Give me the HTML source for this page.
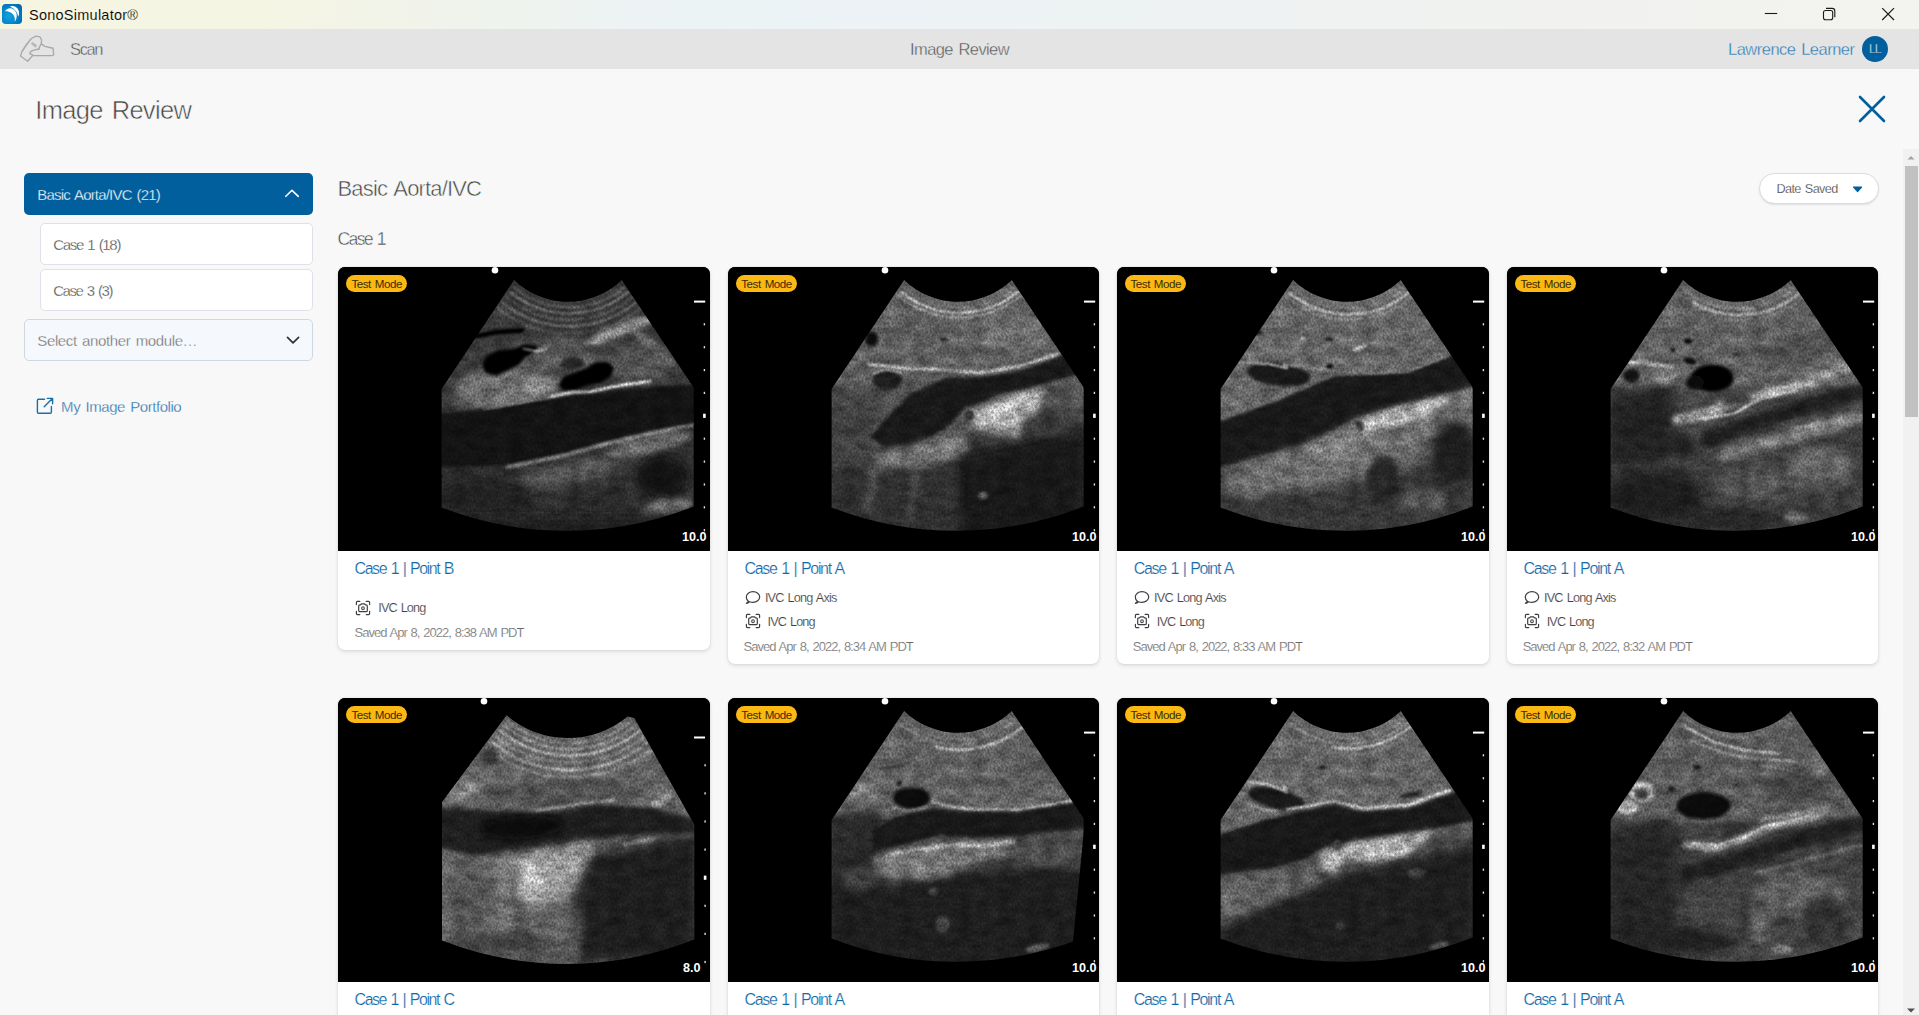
<!DOCTYPE html>
<html lang="en"><head><meta charset="utf-8"><title>SonoSimulator</title>
<style>
html,body{margin:0;padding:0;}
body{width:1919px;height:1015px;overflow:hidden;background:#f8f8f8;font-family:"Liberation Sans",sans-serif;position:relative;}
.t{position:absolute;white-space:nowrap;display:block;margin:0;padding:0;font-weight:400;text-decoration:none;}
.abs{position:absolute;}
#titlebar{left:0;top:0;width:1919px;height:29px;background:linear-gradient(90deg,#f6f5e2 0%,#f5f5e4 14%,#f0f3ec 24%,#edf3f4 33%,#ecf3f6 41%,#eef2f3 60%,#f1f2f0 80%,#f3f3ef 100%);}
#nav{left:0;top:29px;width:1919px;height:40px;background:#e4e4e4;}
.card{position:absolute;width:371.6px;background:#fff;border-radius:7px;box-shadow:0 2px 4px rgba(0,0,0,.10),0 0 2px rgba(0,0,0,.13);overflow:hidden;}
.us{position:absolute;left:0;top:0;width:372px;height:284px;background:#000;display:block;}
.badge{position:absolute;left:8px;top:8px;width:61px;height:17px;border-radius:9px;background:#fdb913;}
.sb{position:absolute;border-radius:5px;box-sizing:border-box;}
</style></head><body>

<svg width="0" height="0" style="position:absolute"><defs>
<clipPath id="sec10"><path d="M176.1,12.9 A77,77 0 0 0 283.7,12.9 L355.7,120.5 L355.7,239.5 A345,345 0 0 1 103.6,240.5 L103.6,122 Z"/></clipPath>
<clipPath id="sec8"><path d="M168.6,17.2 A94,94 0 0 0 289.7,18.6 L296.3,20.1 L356.3,126.5 L356.3,241.5 A345,345 0 0 1 104,242.5 L104,104 Z"/></clipPath>
<filter id="b3" filterUnits="userSpaceOnUse" x="0" y="0" width="1320" height="1015"><feGaussianBlur stdDeviation="3"/></filter>
<filter id="b4" filterUnits="userSpaceOnUse" x="0" y="0" width="1320" height="1015"><feGaussianBlur stdDeviation="4"/></filter>
<filter id="b5" filterUnits="userSpaceOnUse" x="0" y="0" width="1320" height="1015"><feGaussianBlur stdDeviation="5"/></filter>
<filter id="b6" filterUnits="userSpaceOnUse" x="0" y="0" width="1320" height="1015"><feGaussianBlur stdDeviation="6"/></filter>
<filter id="b8" filterUnits="userSpaceOnUse" x="0" y="0" width="1320" height="1015"><feGaussianBlur stdDeviation="8"/></filter>
<filter id="b10" filterUnits="userSpaceOnUse" x="0" y="0" width="1320" height="1015"><feGaussianBlur stdDeviation="10"/></filter>
<filter id="b14" filterUnits="userSpaceOnUse" x="0" y="0" width="1320" height="1015"><feGaussianBlur stdDeviation="14"/></filter>
<filter id="b12" filterUnits="userSpaceOnUse" x="0" y="0" width="1320" height="1015"><feGaussianBlur stdDeviation="12"/></filter>
<filter id="b16" filterUnits="userSpaceOnUse" x="0" y="0" width="1320" height="1015"><feGaussianBlur stdDeviation="16"/></filter>
<filter id="b18" filterUnits="userSpaceOnUse" x="0" y="0" width="1320" height="1015"><feGaussianBlur stdDeviation="18"/></filter>
<filter id="b20" filterUnits="userSpaceOnUse" x="0" y="0" width="1320" height="1015"><feGaussianBlur stdDeviation="20"/></filter>
<filter id="b30" filterUnits="userSpaceOnUse" x="0" y="0" width="1320" height="1015"><feGaussianBlur stdDeviation="30"/></filter>
<filter id="sp" filterUnits="userSpaceOnUse" x="0" y="0" width="372" height="283" color-interpolation-filters="sRGB">
 <feTurbulence type="fractalNoise" baseFrequency="0.5 0.36" numOctaves="2" seed="7" result="n"/>
 <feColorMatrix in="n" type="matrix" values="1 0 0 0 0  1 0 0 0 0  1 0 0 0 0  0 0 0 0 1" result="g"/>
 <feComposite in="SourceGraphic" in2="g" operator="arithmetic" k1="0.84" k2="0.58" k3="0" k4="0" result="s1"/>
 <feTurbulence type="fractalNoise" baseFrequency="0.07 0.10" numOctaves="2" seed="11" result="n2"/>
 <feColorMatrix in="n2" type="matrix" values="1 0 0 0 0  1 0 0 0 0  1 0 0 0 0  0 0 0 0 1" result="g2"/>
 <feComposite in="s1" in2="g2" operator="arithmetic" k1="0.66" k2="0.56" k3="0" k4="0"/>
</filter>
</defs></svg>
<header>
<div id="titlebar" class="abs"></div>
<div id="nav" class="abs"></div>
<span class="t" style="left:29.00px;top:7.73px;font-size:14.5px;line-height:14.5px;letter-spacing:0.247px;word-spacing:0.00px;color:#000;-webkit-text-stroke:0.12px #f6f5e3;">SonoSimulator®</span>
<span class="t" style="left:70.00px;top:40.83px;font-size:16.5px;line-height:16.5px;letter-spacing:-1.370px;word-spacing:0.00px;color:#555;-webkit-text-stroke:0.35px #e4e4e4;">Scan</span>
<span class="t" style="left:910.00px;top:40.83px;font-size:16.5px;line-height:16.5px;letter-spacing:-0.599px;word-spacing:1.65px;color:#545454;-webkit-text-stroke:0.35px #e4e4e4;">Image Review</span>
<span class="t" style="left:1728.00px;top:41.03px;font-size:16.5px;line-height:16.5px;letter-spacing:-0.510px;word-spacing:1.65px;color:#2d7cb6;-webkit-text-stroke:0.3px #e4e4e4;">Lawrence Learner</span>
<div class="abs" style="left:1862px;top:36px;width:26px;height:26px;border-radius:13px;background:#025f9e;"></div>
<span class="t" style="left:1869.00px;top:43.30px;font-size:12.4px;line-height:12.4px;letter-spacing:-1.193px;word-spacing:0.00px;color:#e3eef7;-webkit-text-stroke:0.3px #025f9e;">LL</span>
</header>
<h1 class="t" style="left:35.30px;top:97.51px;font-size:25.5px;line-height:25.5px;letter-spacing:-0.692px;word-spacing:2.55px;color:#444;-webkit-text-stroke:0.55px #f8f8f8;">Image Review</h1>
<aside>
<div class="sb" style="left:24px;top:173px;width:289px;height:42px;background:#025f9e;"></div>
<span class="t" style="left:37.30px;top:186.80px;font-size:15px;line-height:15px;letter-spacing:-0.810px;word-spacing:1.50px;color:#fff;-webkit-text-stroke:0.3px #025f9e;">Basic Aorta/IVC (21)</span>
<div class="sb" style="left:40px;top:223px;width:273px;height:42px;background:#fff;border:1px solid #dde2e8;"></div>
<span class="t" style="left:53.20px;top:237.40px;font-size:15px;line-height:15px;letter-spacing:-1.317px;word-spacing:1.50px;color:#444;-webkit-text-stroke:0.3px #fff;">Case 1 (18)</span>
<div class="sb" style="left:40px;top:269px;width:273px;height:42px;background:#fff;border:1px solid #dde2e8;"></div>
<span class="t" style="left:53.20px;top:283.40px;font-size:15px;line-height:15px;letter-spacing:-1.414px;word-spacing:1.50px;color:#444;-webkit-text-stroke:0.3px #fff;">Case 3 (3)</span>
<div class="sb" style="left:24px;top:319px;width:289px;height:42px;background:#f5f9fd;border:1px solid #cfd7e0;"></div>
<span class="t" style="left:37.30px;top:333.30px;font-size:15px;line-height:15px;letter-spacing:-0.371px;word-spacing:1.50px;color:#6a6a6a;-webkit-text-stroke:0.3px #f5f9fd;">Select another module…</span>
<span class="t" style="left:61.10px;top:399.20px;font-size:15px;line-height:15px;letter-spacing:-0.438px;word-spacing:1.50px;color:#1a6aaa;-webkit-text-stroke:0.3px #f8f8f8;">My Image Portfolio</span>
</aside>
<main>
<h2 class="t" style="left:337.50px;top:177.78px;font-size:22px;line-height:22px;letter-spacing:-0.840px;word-spacing:2.20px;color:#444;-webkit-text-stroke:0.5px #f8f8f8;">Basic Aorta/IVC</h2>
<h3 class="t" style="left:337.60px;top:230.82px;font-size:17.7px;line-height:17.7px;letter-spacing:-1.770px;word-spacing:1.77px;color:#444;-webkit-text-stroke:0.42px #f8f8f8;">Case 1</h3>
<div class="abs" style="left:1759px;top:173px;width:119.5px;height:31px;border-radius:15.5px;background:#fff;border:1px solid #d8dde4;box-sizing:border-box;box-shadow:0 1px 2px rgba(0,0,0,.10);"></div>
<span class="t" style="left:1776.50px;top:182.75px;font-size:12.7px;line-height:12.7px;letter-spacing:-0.648px;word-spacing:1.27px;color:#333;-webkit-text-stroke:0.25px #fff;">Date Saved</span>
<div class="abs" style="left:1903px;top:149px;width:16px;height:866px;background:#f1f1f1;"></div>
<div class="abs" style="left:1905px;top:166px;width:13px;height:251px;background:#c1c1c1;"></div>
<svg class="abs" style="left:2px;top:4px" width="20" height="20" viewBox="0 0 20 20"><defs><radialGradient id="ai" cx="0.35" cy="0.6" r="0.75"><stop offset="0" stop-color="#12a3de"/><stop offset="0.6" stop-color="#0483c9"/><stop offset="1" stop-color="#0466ab"/></radialGradient></defs><rect width="20" height="20" rx="3.8" fill="url(#ai)"/><path d="M3.0,7.2 C5.2,3.9 8.8,3.3 11.6,5.4 C15.2,8.1 15.9,13.0 12.8,17.8 C13.4,13.6 11.8,10.6 9.2,8.8 C7.4,7.5 5.2,7.0 3.0,7.2 Z" fill="#fff"/><path d="M8.0,2.4 C11.8,1.3 15.2,3.0 16.6,6.4 C17.4,8.4 17.2,10.6 16.2,12.6 C15.6,8.4 13.0,4.8 8.0,2.4 Z" fill="#fff"/></svg>
<svg class="abs" style="left:0;top:29px" width="70" height="40" viewBox="0 29 70 40" fill="none" stroke="#a9a9a9" stroke-width="1.35" stroke-linejoin="round" stroke-linecap="round"><path d="M20.48,56.00 L27.72,61.24 L32.97,55.17 L29.79,53.66 L30.34,51.86 L32.41,50.69 L38.62,48.83 L41.24,43.45 L41.66,40.00 L39.86,36.83 L36.00,36.14 L31.38,38.48 L26.55,44.48 L22.21,50.90 Z"/><path d="M41.52,44.14 L44.83,46.34 L53.10,48.28 L53.66,54.62 L52.55,55.59 L32.97,55.59"/><path d="M22.76,51.03 L27.24,44.14 L28.97,42.07" stroke-width="1"/><path d="M30.76,43.59 L32.83,42.07 L37.24,45.38 L35.31,47.72 Z" fill="#b8b8b8" stroke="none"/><path d="M37.79,49.79 L39.66,49.10" stroke-width="1"/></svg>
<svg class="abs" style="left:1750px;top:0" width="169" height="29" viewBox="1750 0 169 29" fill="none" stroke="#1a1a1a" stroke-width="1.1"><path d="M1764.8,13.5 H1777.2"/><rect x="1823.5" y="10.5" width="9.2" height="9.2" rx="2"/><path d="M1826,8.4 H1832.2 a2.6,2.6 0 0 1 2.6,2.6 V17.2"/><path d="M1882.2,8.2 L1894,20 M1894,8.2 L1882.2,20" stroke-width="1.2"/></svg>
<svg class="abs" style="left:1850px;top:88px" width="44" height="44" viewBox="1850 88 44 44" fill="none" stroke="#025f9e" stroke-width="2.6" stroke-linecap="round"><path d="M1860,97 L1884,121 M1884,97 L1860,121"/></svg>
<svg class="abs" style="left:280px;top:185px" width="24" height="16" viewBox="280 185 24 16" fill="none" stroke="#fff" stroke-width="1.6" stroke-linecap="round" stroke-linejoin="round"><path d="M285.8,196.3 L292,190.3 L298.3,196.3"/></svg>
<svg class="abs" style="left:280px;top:332px" width="24" height="16" viewBox="280 332 24 16" fill="none" stroke="#333" stroke-width="1.7" stroke-linecap="round" stroke-linejoin="round"><path d="M287.5,337.3 L293,342.8 L298.6,337.3"/></svg>
<svg class="abs" style="left:34px;top:395px" width="22" height="22" viewBox="34 395 22 22" fill="none" stroke="#1a6eab" stroke-width="1.4" stroke-linecap="round" stroke-linejoin="round"><path d="M44.5,399.3 H38.6 a1.2,1.2 0 0 0 -1.2,1.2 V412 a1.2,1.2 0 0 0 1.2,1.2 H50.2 a1.2,1.2 0 0 0 1.2,-1.2 V406.5"/><path d="M47.3,398.4 H52.6 V403.7 M52.4,398.6 L44.2,406.8"/></svg>
<svg class="abs" style="left:1850px;top:183px" width="16" height="12" viewBox="1850 183 16 12"><path d="M1853.6,187.0 H1861.6 L1857.6,191.6 Z" fill="#025f9e" stroke="#025f9e" stroke-width="1.2" stroke-linejoin="round"/></svg>
<svg class="abs" style="left:1903px;top:150px" width="16" height="16" viewBox="0 0 16 16"><path d="M4.4,9.6 L8,6 L11.6,9.6 Z" fill="#a3a3a3"/></svg>
<svg class="abs" style="left:1903px;top:999px" width="16" height="16" viewBox="0 0 16 16"><path d="M4,9.6 L8,13.6 L12,9.6 Z" fill="#505050"/></svg>
<div class="card" style="left:338px;top:267px;width:372px;height:383px;">
<svg class="us" viewBox="0 0 372 284" width="372" height="284"><rect width="372" height="284" fill="#000"/><g clip-path="url(#sec10)"><g filter="url(#sp)"><rect width="372" height="283" fill="#3c3c3c"/><g transform="translate(-8,-7) scale(0.29542)"><polygon points="378,60 1232,60 1232,330 378,330" fill="#3e3e3e"/><path d="M622,92 A292,292 0 0 0 998,92" fill="none" stroke="#777" stroke-width="6" filter="url(#b3)"/><path d="M609,107 A312,312 0 0 0 1011,107" fill="none" stroke="#9a9a9a" stroke-width="6" filter="url(#b3)"/><path d="M595,124 A334,334 0 0 0 1025,124" fill="none" stroke="#6a6a6a" stroke-width="6" filter="url(#b3)"/><path d="M581,141 A356,356 0 0 0 1039,141" fill="none" stroke="#888" stroke-width="6" filter="url(#b3)"/><path d="M566,159 A380,380 0 0 0 1054,159" fill="none" stroke="#606060" stroke-width="8" filter="url(#b3)"/><ellipse cx="985" cy="236" rx="140" ry="20" fill="#9a9a9a" transform="rotate(-22 985 236)" filter="url(#b8)"/><ellipse cx="1100" cy="300" rx="90" ry="20" fill="#7a7a7a" transform="rotate(40 1100 300)" filter="url(#b8)"/><ellipse cx="600" cy="440" rx="180" ry="80" fill="#7c7c7c" filter="url(#b20)"/><ellipse cx="760" cy="330" rx="160" ry="60" fill="#646464" filter="url(#b20)"/><ellipse cx="1040" cy="350" rx="130" ry="70" fill="#5c5c5c" filter="url(#b20)"/><polyline points="495,258 560,245 650,238" fill="none" stroke="#050505" stroke-width="16" stroke-linecap="round" stroke-linejoin="round" filter="url(#b4)"/><polygon points="515,355 530,325 570,305 620,300 660,285 705,290 692,312 660,330 640,355 600,375 560,392 525,382" fill="#050505" filter="url(#b5)"/><polyline points="655,300 700,310 730,300" fill="none" stroke="#d8d8d8" stroke-width="5" stroke-linecap="round" stroke-linejoin="round" filter="url(#b3)"/><polygon points="775,425 790,395 830,380 870,365 900,345 940,345 962,365 950,395 920,415 870,425 830,440 790,442" fill="#050505" filter="url(#b5)"/><ellipse cx="700" cy="420" rx="60" ry="30" fill="#9a9a9a" filter="url(#b10)"/><ellipse cx="820" cy="350" rx="40" ry="22" fill="#2a2a2a" filter="url(#b6)"/><polygon points="370,520 560,500 740,468 900,448 1100,428 1240,420 1240,560 1100,580 960,612 800,655 600,697 370,706" fill="#141414" filter="url(#b5)"/><polyline points="745,462 820,448 880,446 960,428 1085,410" fill="none" stroke="#ffffff" stroke-width="9" stroke-linecap="round" stroke-linejoin="round" filter="url(#b3)"/><polyline points="520,505 740,466" fill="none" stroke="#8a8a8a" stroke-width="6" stroke-linecap="round" stroke-linejoin="round" filter="url(#b4)"/><polygon points="370,710 600,700 800,660 960,616 1240,560 1240,950 370,950" fill="#363636" filter="url(#b8)"/><polyline points="600,702 800,660 960,616 1100,584 1232,558" fill="none" stroke="#a8a8a8" stroke-width="10" stroke-linecap="round" stroke-linejoin="round" filter="url(#b5)"/><ellipse cx="1080" cy="625" rx="150" ry="28" fill="#808080" transform="rotate(-14 1080 625)" filter="url(#b10)"/><ellipse cx="800" cy="725" rx="200" ry="36" fill="#606060" transform="rotate(-12 800 725)" filter="url(#b14)"/><ellipse cx="1125" cy="735" rx="85" ry="75" fill="#121212" filter="url(#b14)"/><ellipse cx="1140" cy="835" rx="90" ry="24" fill="#787878" transform="rotate(-8 1140 835)" filter="url(#b10)"/><ellipse cx="520" cy="800" rx="180" ry="70" fill="#262626" filter="url(#b20)"/><ellipse cx="900" cy="830" rx="120" ry="50" fill="#2e2e2e" filter="url(#b20)"/><polygon points="370,870 1240,870 1240,950 370,950" fill="#222" filter="url(#b14)"/></g></g></g><circle cx="157" cy="3.3" r="3.3" fill="#fff"/><rect x="356" y="33.6" width="11.2" height="2" fill="#fff"/><rect x="365.7" y="56.2" width="1.4" height="2.2" fill="#ddd"/><rect x="365.7" y="79.1" width="1.4" height="2.2" fill="#ddd"/><rect x="365.7" y="102.0" width="1.4" height="2.2" fill="#ddd"/><rect x="365.7" y="124.8" width="1.4" height="2.2" fill="#ddd"/><rect x="365.1" y="146.7" width="2.6" height="4.2" fill="#fff"/><rect x="365.7" y="170.6" width="1.4" height="2.2" fill="#ddd"/><rect x="365.7" y="193.5" width="1.4" height="2.2" fill="#ddd"/><rect x="365.7" y="216.4" width="1.4" height="2.2" fill="#ddd"/><rect x="365.7" y="239.2" width="1.4" height="2.2" fill="#ddd"/><rect x="365.7" y="262.1" width="1.4" height="2.2" fill="#ddd"/><text x="368.5" y="274.3" text-anchor="end" font-family="Liberation Sans,sans-serif" font-weight="700" font-size="12.6" fill="#fff">10.0</text></svg>
<div class="badge"></div>
<span class="t" style="left:13.40px;top:11.28px;font-size:11.6px;line-height:11.6px;letter-spacing:-0.459px;word-spacing:1.16px;color:#3a2c00;">Test Mode</span>
<h4 class="t" style="left:16.60px;top:293.66px;font-size:16px;line-height:16px;letter-spacing:-1.462px;word-spacing:1.60px;color:#1068a8;-webkit-text-stroke:0.22px #fff;">Case 1 | Point B</h4>
<svg class="abs" style="left:15.5px;top:331.5px" width="18" height="18" viewBox="-9 -9 18 18" fill="none" stroke="#3c3f44" stroke-width="1.2" stroke-linejoin="round" stroke-linecap="round"><path d="M-6.6,-3.4 V-5.6 a1,1 0 0 1 1,-1 H-3.2 M3.2,-6.6 H5.6 a1,1 0 0 1 1,1 V-3.4 M6.6,3.4 V5.6 a1,1 0 0 1 -1,1 H3.2 M-3.2,6.6 H-5.6 a1,1 0 0 1 -1,-1 V3.4"/><path d="M-2.4,-3.2 L-1.6,-4.1 H1.6 L2.4,-3.2 H3 a1.3,1.3 0 0 1 1.3,1.3 V2.4 a1.3,1.3 0 0 1 -1.3,1.3 H-3 a1.3,1.3 0 0 1 -1.3,-1.3 V-1.9 a1.3,1.3 0 0 1 1.3,-1.3 Z"/><ellipse cx="0" cy="0.2" rx="1.3" ry="1.5" stroke-width="1.1"/></svg>
<span class="t" style="left:40.30px;top:335.35px;font-size:12.7px;line-height:12.7px;letter-spacing:-0.889px;word-spacing:1.27px;color:#404040;-webkit-text-stroke:0.15px #fff;">IVC Long</span>
<span class="t" style="left:16.60px;top:359.30px;font-size:13px;line-height:13px;letter-spacing:-1.017px;word-spacing:1.30px;color:#6a6a6a;-webkit-text-stroke:0.2px #fff;">Saved Apr 8, 2022, 8:38 AM PDT</span>
</div>
<div class="card" style="left:727.9px;top:267px;width:371px;height:397px;">
<svg class="us" viewBox="0 0 372 284" width="372" height="284"><rect width="372" height="284" fill="#000"/><g clip-path="url(#sec10)"><g filter="url(#sp)"><rect width="372" height="283" fill="#585858"/><g transform="translate(-7.7,-7) scale(0.29542)"><polygon points="370,60 1240,60 1240,420 370,420" fill="#6a6a6a" filter="url(#b10)"/><path d="M621,93 A294,294 0 0 0 999,93" fill="none" stroke="#8a8a8a" stroke-width="6" filter="url(#b3)"/><path d="M610,106 A311,311 0 0 0 1010,106" fill="none" stroke="#f4f4f4" stroke-width="7" filter="url(#b3)"/><path d="M600,118 A327,327 0 0 0 1020,118" fill="none" stroke="#c0c0c0" stroke-width="6" filter="url(#b3)"/><ellipse cx="1000" cy="250" rx="160" ry="60" fill="#7a7a7a" filter="url(#b20)"/><ellipse cx="512" cy="268" rx="22" ry="26" fill="#080808" filter="url(#b5)"/><ellipse cx="757" cy="268" rx="13" ry="6" fill="#222" filter="url(#b3)"/><polygon points="370,430 520,640 800,610 1240,470 1240,950 370,950" fill="#3a3a3a" filter="url(#b14)"/><polygon points="370,430 520,470 520,640 470,850 370,850" fill="#484848" filter="url(#b14)"/><polyline points="500,352 620,366 760,372 870,382 1010,360 1145,318" fill="none" stroke="#d4d4d4" stroke-width="9" stroke-linecap="round" stroke-linejoin="round" filter="url(#b4)"/><polygon points="1160,322 1010,376 880,396 770,396 640,455 545,555 508,600 560,638 660,626 760,572 830,502 960,452 1100,420 1240,380" fill="#1c1c1c" filter="url(#b5)"/><ellipse cx="565" cy="406" rx="50" ry="32" fill="#202020" filter="url(#b5)"/><polyline points="515,385 560,370 610,380" fill="none" stroke="#bbb" stroke-width="5" stroke-linecap="round" stroke-linejoin="round" filter="url(#b3)"/><polygon points="1100,425 1240,385 1240,560 1080,520" fill="#5a5a5a" filter="url(#b10)"/><polygon points="835,520 950,468 1100,436 1070,520 1000,605 900,585 850,565" fill="#b8b8b8" filter="url(#b12)"/><ellipse cx="975" cy="500" rx="90" ry="26" fill="#e0e0e0" transform="rotate(-22 975 500)" filter="url(#b10)"/><ellipse cx="842" cy="525" rx="17" ry="19" fill="#3a3a3a" filter="url(#b4)"/><polygon points="515,655 800,590 840,640 700,705 520,730" fill="#7e7e7e" filter="url(#b12)"/><ellipse cx="780" cy="640" rx="60" ry="36" fill="#909090" filter="url(#b12)"/><polygon points="800,660 1240,570 1240,950 800,950" fill="#1a1a1a" filter="url(#b20)"/><ellipse cx="1120" cy="560" rx="100" ry="40" fill="#3c3c3c" filter="url(#b14)"/><ellipse cx="890" cy="798" rx="16" ry="12" fill="#6a6a6a" filter="url(#b5)"/><polygon points="370,700 800,720 800,950 370,950" fill="#343434" filter="url(#b20)"/><polyline points="520,700 500,840" fill="none" stroke="#585858" stroke-width="30" stroke-linecap="round" stroke-linejoin="round" filter="url(#b10)"/><polyline points="660,720 640,860" fill="none" stroke="#505050" stroke-width="30" stroke-linecap="round" stroke-linejoin="round" filter="url(#b10)"/></g></g></g><circle cx="157" cy="3.3" r="3.3" fill="#fff"/><rect x="356" y="33.6" width="11.2" height="2" fill="#fff"/><rect x="365.7" y="56.2" width="1.4" height="2.2" fill="#ddd"/><rect x="365.7" y="79.1" width="1.4" height="2.2" fill="#ddd"/><rect x="365.7" y="102.0" width="1.4" height="2.2" fill="#ddd"/><rect x="365.7" y="124.8" width="1.4" height="2.2" fill="#ddd"/><rect x="365.1" y="146.7" width="2.6" height="4.2" fill="#fff"/><rect x="365.7" y="170.6" width="1.4" height="2.2" fill="#ddd"/><rect x="365.7" y="193.5" width="1.4" height="2.2" fill="#ddd"/><rect x="365.7" y="216.4" width="1.4" height="2.2" fill="#ddd"/><rect x="365.7" y="239.2" width="1.4" height="2.2" fill="#ddd"/><rect x="365.7" y="262.1" width="1.4" height="2.2" fill="#ddd"/><text x="368.5" y="274.3" text-anchor="end" font-family="Liberation Sans,sans-serif" font-weight="700" font-size="12.6" fill="#fff">10.0</text></svg>
<div class="badge"></div>
<span class="t" style="left:13.40px;top:11.28px;font-size:11.6px;line-height:11.6px;letter-spacing:-0.459px;word-spacing:1.16px;color:#3a2c00;">Test Mode</span>
<h4 class="t" style="left:16.60px;top:293.66px;font-size:16px;line-height:16px;letter-spacing:-1.336px;word-spacing:1.60px;color:#1068a8;-webkit-text-stroke:0.22px #fff;">Case 1 | Point A</h4>
<svg class="abs" style="left:16.3px;top:322.0px" width="18" height="16" viewBox="-9 -8 18 16" fill="none" stroke="#3c3f44" stroke-width="1.2" stroke-linejoin="round" stroke-linecap="round"><path d="M-4.6,4.2 C-6,3.2 -6.7,1.7 -6.7,0 C-6.7,-2.9 -3.7,-5.3 0,-5.3 C3.7,-5.3 6.7,-2.9 6.7,0 C6.7,2.9 3.7,5.3 0,5.3 C-1.2,5.3 -2.4,5.1 -3.4,4.7 C-4.4,5.6 -5.5,6.2 -6.6,6.3 C-5.8,5.6 -5.0,4.9 -4.6,4.2 Z"/></svg>
<svg class="abs" style="left:16.2px;top:345.2px" width="18" height="18" viewBox="-9 -9 18 18" fill="none" stroke="#3c3f44" stroke-width="1.2" stroke-linejoin="round" stroke-linecap="round"><path d="M-6.6,-3.4 V-5.6 a1,1 0 0 1 1,-1 H-3.2 M3.2,-6.6 H5.6 a1,1 0 0 1 1,1 V-3.4 M6.6,3.4 V5.6 a1,1 0 0 1 -1,1 H3.2 M-3.2,6.6 H-5.6 a1,1 0 0 1 -1,-1 V3.4"/><path d="M-2.4,-3.2 L-1.6,-4.1 H1.6 L2.4,-3.2 H3 a1.3,1.3 0 0 1 1.3,1.3 V2.4 a1.3,1.3 0 0 1 -1.3,1.3 H-3 a1.3,1.3 0 0 1 -1.3,-1.3 V-1.9 a1.3,1.3 0 0 1 1.3,-1.3 Z"/><ellipse cx="0" cy="0.2" rx="1.3" ry="1.5" stroke-width="1.1"/></svg>
<span class="t" style="left:37.00px;top:324.55px;font-size:12.7px;line-height:12.7px;letter-spacing:-0.818px;word-spacing:1.27px;color:#404040;-webkit-text-stroke:0.15px #fff;">IVC Long Axis</span>
<span class="t" style="left:39.70px;top:348.50px;font-size:12.7px;line-height:12.7px;letter-spacing:-0.889px;word-spacing:1.27px;color:#404040;-webkit-text-stroke:0.15px #fff;">IVC Long</span>
<span class="t" style="left:15.70px;top:372.80px;font-size:13px;line-height:13px;letter-spacing:-1.004px;word-spacing:1.30px;color:#6a6a6a;-webkit-text-stroke:0.2px #fff;">Saved Apr 8, 2022, 8:34 AM PDT</span>
</div>
<div class="card" style="left:1117.1px;top:267px;width:372px;height:397px;">
<svg class="us" viewBox="0 0 372 284" width="372" height="284"><rect width="372" height="284" fill="#000"/><g clip-path="url(#sec10)"><g filter="url(#sp)"><rect width="372" height="283" fill="#585858"/><g transform="translate(-7.3,-7) scale(0.29542)"><polygon points="370,60 1240,60 1240,560 370,560" fill="#727272" filter="url(#b10)"/><path d="M620,95 A296,296 0 0 0 1000,95" fill="none" stroke="#909090" stroke-width="6" filter="url(#b3)"/><path d="M607,110 A316,316 0 0 0 1013,110" fill="none" stroke="#f0f0f0" stroke-width="7" filter="url(#b3)"/><path d="M596,123 A333,333 0 0 0 1024,123" fill="none" stroke="#a8a8a8" stroke-width="5" filter="url(#b3)"/><ellipse cx="655" cy="268" rx="8" ry="5" fill="#eee" filter="url(#b3)"/><ellipse cx="845" cy="298" rx="28" ry="7" fill="#ddd" transform="rotate(-20 845 298)" filter="url(#b3)"/><ellipse cx="742" cy="268" rx="16" ry="6" fill="#1a1a1a" filter="url(#b3)"/><ellipse cx="745" cy="360" rx="11" ry="9" fill="#111" filter="url(#b3)"/><ellipse cx="505" cy="245" rx="12" ry="8" fill="#222" filter="url(#b3)"/><ellipse cx="572" cy="388" rx="108" ry="38" fill="#1c1c1c" transform="rotate(6 572 388)" filter="url(#b5)"/><polyline points="470,347 540,352 600,366 590,350" fill="none" stroke="#e8e8e8" stroke-width="6" stroke-linecap="round" stroke-linejoin="round" filter="url(#b3)"/><polyline points="600,355 720,372 830,380" fill="none" stroke="#a8a8a8" stroke-width="6" stroke-linecap="round" stroke-linejoin="round" filter="url(#b4)"/><polygon points="365,548 560,480 700,420 770,390 900,386 1010,380 1150,326 1240,296 1240,428 1100,465 960,500 830,540 700,610 560,650 420,690 365,704" fill="#1d1d1d" filter="url(#b5)"/><polyline points="770,388 900,383 1010,377 1150,323" fill="none" stroke="#909090" stroke-width="5" stroke-linecap="round" stroke-linejoin="round" filter="url(#b4)"/><polygon points="420,700 560,655 700,615 830,545 960,505 1100,470 1240,432 1240,580 1080,610 1000,700 700,770 560,800 420,760" fill="#7a7a7a" filter="url(#b14)"/><polygon points="830,548 960,506 1100,470 1160,455 1100,520 960,560 860,600" fill="#cccccc" filter="url(#b10)"/><ellipse cx="760" cy="640" rx="80" ry="44" fill="#949494" filter="url(#b14)"/><ellipse cx="845" cy="562" rx="13" ry="20" fill="#444" transform="rotate(-20 845 562)" filter="url(#b4)"/><polygon points="365,720 480,780 700,790 1000,720 1240,600 1240,950 365,950" fill="#3c3c3c" filter="url(#b16)"/><ellipse cx="925" cy="745" rx="55" ry="85" fill="#2a2a2a" filter="url(#b12)"/><ellipse cx="1165" cy="650" rx="70" ry="110" fill="#242424" filter="url(#b14)"/><ellipse cx="470" cy="760" rx="80" ry="50" fill="#7a7a7a" filter="url(#b14)"/><ellipse cx="700" cy="850" rx="200" ry="50" fill="#3c3c3c" filter="url(#b16)"/><ellipse cx="1060" cy="820" rx="80" ry="40" fill="#606060" filter="url(#b14)"/></g></g></g><circle cx="157" cy="3.3" r="3.3" fill="#fff"/><rect x="356" y="33.6" width="11.2" height="2" fill="#fff"/><rect x="365.7" y="56.2" width="1.4" height="2.2" fill="#ddd"/><rect x="365.7" y="79.1" width="1.4" height="2.2" fill="#ddd"/><rect x="365.7" y="102.0" width="1.4" height="2.2" fill="#ddd"/><rect x="365.7" y="124.8" width="1.4" height="2.2" fill="#ddd"/><rect x="365.1" y="146.7" width="2.6" height="4.2" fill="#fff"/><rect x="365.7" y="170.6" width="1.4" height="2.2" fill="#ddd"/><rect x="365.7" y="193.5" width="1.4" height="2.2" fill="#ddd"/><rect x="365.7" y="216.4" width="1.4" height="2.2" fill="#ddd"/><rect x="365.7" y="239.2" width="1.4" height="2.2" fill="#ddd"/><rect x="365.7" y="262.1" width="1.4" height="2.2" fill="#ddd"/><text x="368.5" y="274.3" text-anchor="end" font-family="Liberation Sans,sans-serif" font-weight="700" font-size="12.6" fill="#fff">10.0</text></svg>
<div class="badge"></div>
<span class="t" style="left:13.40px;top:11.28px;font-size:11.6px;line-height:11.6px;letter-spacing:-0.459px;word-spacing:1.16px;color:#3a2c00;">Test Mode</span>
<h4 class="t" style="left:16.60px;top:293.66px;font-size:16px;line-height:16px;letter-spacing:-1.336px;word-spacing:1.60px;color:#1068a8;-webkit-text-stroke:0.22px #fff;">Case 1 | Point A</h4>
<svg class="abs" style="left:16.3px;top:322.0px" width="18" height="16" viewBox="-9 -8 18 16" fill="none" stroke="#3c3f44" stroke-width="1.2" stroke-linejoin="round" stroke-linecap="round"><path d="M-4.6,4.2 C-6,3.2 -6.7,1.7 -6.7,0 C-6.7,-2.9 -3.7,-5.3 0,-5.3 C3.7,-5.3 6.7,-2.9 6.7,0 C6.7,2.9 3.7,5.3 0,5.3 C-1.2,5.3 -2.4,5.1 -3.4,4.7 C-4.4,5.6 -5.5,6.2 -6.6,6.3 C-5.8,5.6 -5.0,4.9 -4.6,4.2 Z"/></svg>
<svg class="abs" style="left:16.2px;top:345.2px" width="18" height="18" viewBox="-9 -9 18 18" fill="none" stroke="#3c3f44" stroke-width="1.2" stroke-linejoin="round" stroke-linecap="round"><path d="M-6.6,-3.4 V-5.6 a1,1 0 0 1 1,-1 H-3.2 M3.2,-6.6 H5.6 a1,1 0 0 1 1,1 V-3.4 M6.6,3.4 V5.6 a1,1 0 0 1 -1,1 H3.2 M-3.2,6.6 H-5.6 a1,1 0 0 1 -1,-1 V3.4"/><path d="M-2.4,-3.2 L-1.6,-4.1 H1.6 L2.4,-3.2 H3 a1.3,1.3 0 0 1 1.3,1.3 V2.4 a1.3,1.3 0 0 1 -1.3,1.3 H-3 a1.3,1.3 0 0 1 -1.3,-1.3 V-1.9 a1.3,1.3 0 0 1 1.3,-1.3 Z"/><ellipse cx="0" cy="0.2" rx="1.3" ry="1.5" stroke-width="1.1"/></svg>
<span class="t" style="left:37.00px;top:324.55px;font-size:12.7px;line-height:12.7px;letter-spacing:-0.818px;word-spacing:1.27px;color:#404040;-webkit-text-stroke:0.15px #fff;">IVC Long Axis</span>
<span class="t" style="left:39.70px;top:348.50px;font-size:12.7px;line-height:12.7px;letter-spacing:-0.889px;word-spacing:1.27px;color:#404040;-webkit-text-stroke:0.15px #fff;">IVC Long</span>
<span class="t" style="left:15.70px;top:372.80px;font-size:13px;line-height:13px;letter-spacing:-1.004px;word-spacing:1.30px;color:#6a6a6a;-webkit-text-stroke:0.2px #fff;">Saved Apr 8, 2022, 8:33 AM PDT</span>
</div>
<div class="card" style="left:1507px;top:267px;width:371.4px;height:397px;">
<svg class="us" viewBox="0 0 372 284" width="372" height="284"><rect width="372" height="284" fill="#000"/><g clip-path="url(#sec10)"><g filter="url(#sp)"><rect width="372" height="283" fill="#505050"/><g transform="translate(-6.8,-7) scale(0.29542)"><polygon points="370,60 1240,60 1240,430 370,430" fill="#6c6c6c" filter="url(#b10)"/><path d="M621,93 A294,294 0 0 0 999,93" fill="none" stroke="#8a8a8a" stroke-width="6" filter="url(#b3)"/><path d="M651,143 A318,318 0 0 0 1014,112" fill="none" stroke="#e0e0e0" stroke-width="7" filter="url(#b3)"/><path d="M617,98 A300,300 0 0 0 862,163" fill="none" stroke="#b0b0b0" stroke-width="5" filter="url(#b3)"/><path d="M752,199 A336,336 0 0 0 1026,125" fill="none" stroke="#8c8c8c" stroke-width="5" filter="url(#b3)"/><ellipse cx="1000" cy="300" rx="150" ry="50" fill="#5c5c5c" transform="rotate(-15 1000 300)" filter="url(#b16)"/><ellipse cx="636" cy="275" rx="14" ry="10" fill="#111" filter="url(#b3)"/><ellipse cx="584" cy="305" rx="9" ry="8" fill="#1a1a1a" filter="url(#b3)"/><ellipse cx="642" cy="342" rx="22" ry="12" fill="#111" transform="rotate(15 642 342)" filter="url(#b4)"/><ellipse cx="800" cy="320" rx="12" ry="5" fill="#333" filter="url(#b3)"/><ellipse cx="718" cy="400" rx="72" ry="46" fill="#060606" filter="url(#b6)"/><ellipse cx="660" cy="415" rx="30" ry="25" fill="#0c0c0c" filter="url(#b6)"/><polyline points="440,345 520,352 580,362" fill="none" stroke="#c4c4c4" stroke-width="14" stroke-linecap="round" stroke-linejoin="round" filter="url(#b6)"/><ellipse cx="445" cy="392" rx="28" ry="24" fill="#181818" filter="url(#b6)"/><ellipse cx="560" cy="400" rx="40" ry="22" fill="#999" filter="url(#b8)"/><polygon points="365,450 600,430 580,560 700,650 365,720" fill="#262626" filter="url(#b20)"/><polyline points="600,540 700,520 800,475 1000,430 1130,380 1240,330" fill="none" stroke="#a8a8a8" stroke-width="34" stroke-linecap="round" stroke-linejoin="round" filter="url(#b8)"/><polyline points="640,545 720,530 790,520 880,470 1000,440" fill="none" stroke="#d8d8d8" stroke-width="9" stroke-linecap="round" stroke-linejoin="round" filter="url(#b4)"/><polyline points="900,440 1060,420" fill="none" stroke="#d0d0d0" stroke-width="10" stroke-linecap="round" stroke-linejoin="round" filter="url(#b5)"/><ellipse cx="800" cy="470" rx="50" ry="22" fill="#444" filter="url(#b8)"/><polyline points="700,610 820,565 1000,505 1240,440" fill="none" stroke="#242424" stroke-width="56" stroke-linecap="round" stroke-linejoin="round" filter="url(#b10)"/><polyline points="760,665 1000,590 1240,525" fill="none" stroke="#8c8c8c" stroke-width="44" stroke-linecap="round" stroke-linejoin="round" filter="url(#b10)"/><polyline points="980,575 1150,540" fill="none" stroke="#bbb" stroke-width="8" stroke-linecap="round" stroke-linejoin="round" filter="url(#b5)"/><polygon points="365,700 760,690 1240,580 1240,950 365,950" fill="#424242" filter="url(#b16)"/><ellipse cx="1080" cy="700" rx="120" ry="70" fill="#707070" filter="url(#b16)"/><ellipse cx="870" cy="760" rx="150" ry="60" fill="#5c5c5c" filter="url(#b16)"/><ellipse cx="520" cy="800" rx="170" ry="90" fill="#242424" filter="url(#b20)"/><ellipse cx="1000" cy="870" rx="40" ry="16" fill="#888" filter="url(#b8)"/><ellipse cx="760" cy="880" rx="200" ry="40" fill="#2c2c2c" filter="url(#b16)"/></g></g></g><circle cx="157" cy="3.3" r="3.3" fill="#fff"/><rect x="356" y="33.6" width="11.2" height="2" fill="#fff"/><rect x="365.7" y="56.2" width="1.4" height="2.2" fill="#ddd"/><rect x="365.7" y="79.1" width="1.4" height="2.2" fill="#ddd"/><rect x="365.7" y="102.0" width="1.4" height="2.2" fill="#ddd"/><rect x="365.7" y="124.8" width="1.4" height="2.2" fill="#ddd"/><rect x="365.1" y="146.7" width="2.6" height="4.2" fill="#fff"/><rect x="365.7" y="170.6" width="1.4" height="2.2" fill="#ddd"/><rect x="365.7" y="193.5" width="1.4" height="2.2" fill="#ddd"/><rect x="365.7" y="216.4" width="1.4" height="2.2" fill="#ddd"/><rect x="365.7" y="239.2" width="1.4" height="2.2" fill="#ddd"/><rect x="365.7" y="262.1" width="1.4" height="2.2" fill="#ddd"/><text x="368.5" y="274.3" text-anchor="end" font-family="Liberation Sans,sans-serif" font-weight="700" font-size="12.6" fill="#fff">10.0</text></svg>
<div class="badge"></div>
<span class="t" style="left:13.40px;top:11.28px;font-size:11.6px;line-height:11.6px;letter-spacing:-0.459px;word-spacing:1.16px;color:#3a2c00;">Test Mode</span>
<h4 class="t" style="left:16.60px;top:293.66px;font-size:16px;line-height:16px;letter-spacing:-1.336px;word-spacing:1.60px;color:#1068a8;-webkit-text-stroke:0.22px #fff;">Case 1 | Point A</h4>
<svg class="abs" style="left:16.3px;top:322.0px" width="18" height="16" viewBox="-9 -8 18 16" fill="none" stroke="#3c3f44" stroke-width="1.2" stroke-linejoin="round" stroke-linecap="round"><path d="M-4.6,4.2 C-6,3.2 -6.7,1.7 -6.7,0 C-6.7,-2.9 -3.7,-5.3 0,-5.3 C3.7,-5.3 6.7,-2.9 6.7,0 C6.7,2.9 3.7,5.3 0,5.3 C-1.2,5.3 -2.4,5.1 -3.4,4.7 C-4.4,5.6 -5.5,6.2 -6.6,6.3 C-5.8,5.6 -5.0,4.9 -4.6,4.2 Z"/></svg>
<svg class="abs" style="left:16.2px;top:345.2px" width="18" height="18" viewBox="-9 -9 18 18" fill="none" stroke="#3c3f44" stroke-width="1.2" stroke-linejoin="round" stroke-linecap="round"><path d="M-6.6,-3.4 V-5.6 a1,1 0 0 1 1,-1 H-3.2 M3.2,-6.6 H5.6 a1,1 0 0 1 1,1 V-3.4 M6.6,3.4 V5.6 a1,1 0 0 1 -1,1 H3.2 M-3.2,6.6 H-5.6 a1,1 0 0 1 -1,-1 V3.4"/><path d="M-2.4,-3.2 L-1.6,-4.1 H1.6 L2.4,-3.2 H3 a1.3,1.3 0 0 1 1.3,1.3 V2.4 a1.3,1.3 0 0 1 -1.3,1.3 H-3 a1.3,1.3 0 0 1 -1.3,-1.3 V-1.9 a1.3,1.3 0 0 1 1.3,-1.3 Z"/><ellipse cx="0" cy="0.2" rx="1.3" ry="1.5" stroke-width="1.1"/></svg>
<span class="t" style="left:37.00px;top:324.55px;font-size:12.7px;line-height:12.7px;letter-spacing:-0.818px;word-spacing:1.27px;color:#404040;-webkit-text-stroke:0.15px #fff;">IVC Long Axis</span>
<span class="t" style="left:39.70px;top:348.50px;font-size:12.7px;line-height:12.7px;letter-spacing:-0.889px;word-spacing:1.27px;color:#404040;-webkit-text-stroke:0.15px #fff;">IVC Long</span>
<span class="t" style="left:15.70px;top:372.80px;font-size:13px;line-height:13px;letter-spacing:-1.004px;word-spacing:1.30px;color:#6a6a6a;-webkit-text-stroke:0.2px #fff;">Saved Apr 8, 2022, 8:32 AM PDT</span>
</div>
<div class="card" style="left:338px;top:698px;width:372px;height:383px;">
<svg class="us" viewBox="0 0 372 284" width="372" height="284"><rect width="372" height="284" fill="#000"/><g clip-path="url(#sec8)"><g filter="url(#sp)"><rect width="372" height="283" fill="#5c5c5c"/><g transform="translate(-8,-8) scale(0.29542)"><polygon points="370,60 1240,60 1240,420 370,420" fill="#6e6e6e" filter="url(#b10)"/><path d="M600,103 A330,330 0 0 0 1024,103" fill="none" stroke="#a0a0a0" stroke-width="7" filter="url(#b3)"/><path d="M587,118 A350,350 0 0 0 1037,118" fill="none" stroke="#b8b8b8" stroke-width="6" filter="url(#b3)"/><path d="M573,135 A372,372 0 0 0 1051,135" fill="none" stroke="#d0d0d0" stroke-width="7" filter="url(#b3)"/><path d="M557,153 A396,396 0 0 0 1067,153" fill="none" stroke="#a4a4a4" stroke-width="7" filter="url(#b3)"/><path d="M542,172 A420,420 0 0 0 1082,172" fill="none" stroke="#c0c0c0" stroke-width="7" filter="url(#b3)"/><path d="M525,192 A446,446 0 0 0 1099,192" fill="none" stroke="#989898" stroke-width="8" filter="url(#b4)"/><ellipse cx="540" cy="225" rx="30" ry="30" fill="#3c3c3c" filter="url(#b8)"/><ellipse cx="760" cy="350" rx="300" ry="40" fill="#5a5a5a" filter="url(#b14)"/><ellipse cx="450" cy="340" rx="70" ry="40" fill="#909090" filter="url(#b14)"/><polyline points="700,408 860,385 960,372" fill="none" stroke="#b8b8b8" stroke-width="8" stroke-linecap="round" stroke-linejoin="round" filter="url(#b4)"/><ellipse cx="1120" cy="375" rx="40" ry="14" fill="#aaa" transform="rotate(-25 1120 375)" filter="url(#b6)"/><polygon points="365,395 560,408 700,420 900,386 1100,400 1240,440 1240,485 1000,492 800,522 600,545 480,562 365,535" fill="#202020" filter="url(#b8)"/><ellipse cx="650" cy="465" rx="140" ry="40" fill="#0a0a0a" transform="rotate(-4 650 465)" filter="url(#b10)"/><polygon points="365,545 480,570 620,560 640,900 365,900" fill="#7c7c7c" filter="url(#b14)"/><polygon points="600,565 900,508 870,600 810,700 700,770 620,650" fill="#a8a8a8" filter="url(#b16)"/><ellipse cx="690" cy="640" rx="55" ry="70" fill="#cfcfcf" transform="rotate(30 690 640)" filter="url(#b14)"/><polyline points="1000,522 1100,505" fill="none" stroke="#a0a0a0" stroke-width="14" stroke-linecap="round" stroke-linejoin="round" filter="url(#b6)"/><polygon points="890,560 1240,495 1240,900 850,920 835,700" fill="#222" filter="url(#b16)"/><ellipse cx="760" cy="800" rx="90" ry="80" fill="#6a6a6a" filter="url(#b16)"/><ellipse cx="470" cy="700" rx="90" ry="120" fill="#606060" filter="url(#b16)"/><ellipse cx="560" cy="860" rx="180" ry="40" fill="#4a4a4a" filter="url(#b14)"/></g></g></g><circle cx="146" cy="3.3" r="3.3" fill="#fff"/><rect x="356" y="38.5" width="11" height="2" fill="#fff"/><rect x="366.4" y="66.2" width="1.4" height="2.2" fill="#ddd"/><rect x="366.4" y="94.3" width="1.4" height="2.2" fill="#ddd"/><rect x="366.4" y="122.4" width="1.4" height="2.2" fill="#ddd"/><rect x="366.4" y="150.5" width="1.4" height="2.2" fill="#ddd"/><rect x="365.8" y="177.6" width="2.6" height="4.2" fill="#fff"/><rect x="366.4" y="206.7" width="1.4" height="2.2" fill="#ddd"/><rect x="366.4" y="234.8" width="1.4" height="2.2" fill="#ddd"/><rect x="366.4" y="262.9" width="1.4" height="2.2" fill="#ddd"/><text x="362.5" y="274.3" text-anchor="end" font-family="Liberation Sans,sans-serif" font-weight="700" font-size="12.6" fill="#fff">8.0</text></svg>
<div class="badge"></div>
<span class="t" style="left:13.40px;top:11.28px;font-size:11.6px;line-height:11.6px;letter-spacing:-0.459px;word-spacing:1.16px;color:#3a2c00;">Test Mode</span>
<h4 class="t" style="left:16.60px;top:293.66px;font-size:16px;line-height:16px;letter-spacing:-1.474px;word-spacing:1.60px;color:#1068a8;-webkit-text-stroke:0.22px #fff;">Case 1 | Point C</h4>
<svg class="abs" style="left:15.5px;top:331.5px" width="18" height="18" viewBox="-9 -9 18 18" fill="none" stroke="#3c3f44" stroke-width="1.2" stroke-linejoin="round" stroke-linecap="round"><path d="M-6.6,-3.4 V-5.6 a1,1 0 0 1 1,-1 H-3.2 M3.2,-6.6 H5.6 a1,1 0 0 1 1,1 V-3.4 M6.6,3.4 V5.6 a1,1 0 0 1 -1,1 H3.2 M-3.2,6.6 H-5.6 a1,1 0 0 1 -1,-1 V3.4"/><path d="M-2.4,-3.2 L-1.6,-4.1 H1.6 L2.4,-3.2 H3 a1.3,1.3 0 0 1 1.3,1.3 V2.4 a1.3,1.3 0 0 1 -1.3,1.3 H-3 a1.3,1.3 0 0 1 -1.3,-1.3 V-1.9 a1.3,1.3 0 0 1 1.3,-1.3 Z"/><ellipse cx="0" cy="0.2" rx="1.3" ry="1.5" stroke-width="1.1"/></svg>
<span class="t" style="left:40.30px;top:335.35px;font-size:12.7px;line-height:12.7px;letter-spacing:-0.889px;word-spacing:1.27px;color:#404040;-webkit-text-stroke:0.15px #fff;">IVC Long</span>
<span class="t" style="left:16.60px;top:359.30px;font-size:13px;line-height:13px;letter-spacing:0.000px;word-spacing:0.00px;color:#6a6a6a;-webkit-text-stroke:0.2px #fff;">Saved</span>
</div>
<div class="card" style="left:727.9px;top:698px;width:371px;height:397px;">
<svg class="us" viewBox="0 0 372 284" width="372" height="284"><rect width="372" height="284" fill="#000"/><g clip-path="url(#sec10)"><g filter="url(#sp)"><rect width="372" height="283" fill="#4c4c4c"/><g transform="translate(-7.7,-8) scale(0.29542)"><polygon points="370,60 1240,60 1240,430 370,430" fill="#6c6c6c" filter="url(#b10)"/><path d="M617,98 A300,300 0 0 0 1003,98" fill="none" stroke="#8c8c8c" stroke-width="6" filter="url(#b3)"/><path d="M729,192 A334,334 0 0 0 1025,124" fill="none" stroke="#e4e4e4" stroke-width="7" filter="url(#b3)"/><path d="M606,112 A318,318 0 0 0 865,181" fill="none" stroke="#a0a0a0" stroke-width="5" filter="url(#b3)"/><ellipse cx="1080" cy="250" rx="60" ry="30" fill="#585858" filter="url(#b12)"/><polyline points="540,266 620,256" fill="none" stroke="#2a2a2a" stroke-width="6" stroke-linecap="round" stroke-linejoin="round" filter="url(#b3)"/><ellipse cx="606" cy="315" rx="9" ry="9" fill="#151515" filter="url(#b3)"/><ellipse cx="647" cy="366" rx="63" ry="36" fill="#0c0c0c" filter="url(#b5)"/><polyline points="585,400 640,410 700,395" fill="none" stroke="#c0c0c0" stroke-width="5" stroke-linecap="round" stroke-linejoin="round" filter="url(#b3)"/><polygon points="365,430 540,400 520,700 365,720" fill="#2e2e2e" filter="url(#b16)"/><ellipse cx="490" cy="350" rx="50" ry="30" fill="#909090" filter="url(#b10)"/><polyline points="720,380 790,396 860,404 1010,406 1140,385 1240,365" fill="none" stroke="#d0d0d0" stroke-width="9" stroke-linecap="round" stroke-linejoin="round" filter="url(#b4)"/><polygon points="515,475 600,428 720,400 860,412 1010,412 1240,374 1240,470 1010,497 860,502 740,492 640,520 515,545" fill="#1b1b1b" filter="url(#b5)"/><polygon points="520,565 640,532 800,512 1000,506 960,565 800,605 600,645 520,610" fill="#808080" filter="url(#b10)"/><ellipse cx="757" cy="506" rx="16" ry="16" fill="#505050" filter="url(#b3)"/><polyline points="560,560 640,545 780,524 900,527 1000,512" fill="none" stroke="#dcdcdc" stroke-width="10" stroke-linecap="round" stroke-linejoin="round" filter="url(#b5)"/><polygon points="1000,500 1240,472 1240,600 1000,600" fill="#545454" filter="url(#b12)"/><polygon points="365,650 600,660 800,620 1000,600 1240,610 1240,950 365,950" fill="#222" filter="url(#b14)"/><ellipse cx="700" cy="610" rx="90" ry="26" fill="#8c8c8c" filter="url(#b10)"/><ellipse cx="752" cy="792" rx="24" ry="28" fill="#4a4a4a" filter="url(#b6)"/><ellipse cx="720" cy="682" rx="16" ry="14" fill="#505050" filter="url(#b5)"/><ellipse cx="1075" cy="872" rx="42" ry="12" fill="#686868" transform="rotate(-12 1075 872)" filter="url(#b5)"/><polygon points="1234,445 1192,870 1250,870 1250,445" fill="#000"/><ellipse cx="470" cy="640" rx="60" ry="40" fill="#444" filter="url(#b12)"/></g></g></g><circle cx="157" cy="3.3" r="3.3" fill="#fff"/><rect x="356" y="33.6" width="11.2" height="2" fill="#fff"/><rect x="365.7" y="56.2" width="1.4" height="2.2" fill="#ddd"/><rect x="365.7" y="79.1" width="1.4" height="2.2" fill="#ddd"/><rect x="365.7" y="102.0" width="1.4" height="2.2" fill="#ddd"/><rect x="365.7" y="124.8" width="1.4" height="2.2" fill="#ddd"/><rect x="365.1" y="146.7" width="2.6" height="4.2" fill="#fff"/><rect x="365.7" y="170.6" width="1.4" height="2.2" fill="#ddd"/><rect x="365.7" y="193.5" width="1.4" height="2.2" fill="#ddd"/><rect x="365.7" y="216.4" width="1.4" height="2.2" fill="#ddd"/><rect x="365.7" y="239.2" width="1.4" height="2.2" fill="#ddd"/><rect x="365.7" y="262.1" width="1.4" height="2.2" fill="#ddd"/><text x="368.5" y="274.3" text-anchor="end" font-family="Liberation Sans,sans-serif" font-weight="700" font-size="12.6" fill="#fff">10.0</text></svg>
<div class="badge"></div>
<span class="t" style="left:13.40px;top:11.28px;font-size:11.6px;line-height:11.6px;letter-spacing:-0.459px;word-spacing:1.16px;color:#3a2c00;">Test Mode</span>
<h4 class="t" style="left:16.60px;top:293.66px;font-size:16px;line-height:16px;letter-spacing:-1.336px;word-spacing:1.60px;color:#1068a8;-webkit-text-stroke:0.22px #fff;">Case 1 | Point A</h4>
<svg class="abs" style="left:16.3px;top:322.0px" width="18" height="16" viewBox="-9 -8 18 16" fill="none" stroke="#3c3f44" stroke-width="1.2" stroke-linejoin="round" stroke-linecap="round"><path d="M-4.6,4.2 C-6,3.2 -6.7,1.7 -6.7,0 C-6.7,-2.9 -3.7,-5.3 0,-5.3 C3.7,-5.3 6.7,-2.9 6.7,0 C6.7,2.9 3.7,5.3 0,5.3 C-1.2,5.3 -2.4,5.1 -3.4,4.7 C-4.4,5.6 -5.5,6.2 -6.6,6.3 C-5.8,5.6 -5.0,4.9 -4.6,4.2 Z"/></svg>
<svg class="abs" style="left:16.2px;top:345.2px" width="18" height="18" viewBox="-9 -9 18 18" fill="none" stroke="#3c3f44" stroke-width="1.2" stroke-linejoin="round" stroke-linecap="round"><path d="M-6.6,-3.4 V-5.6 a1,1 0 0 1 1,-1 H-3.2 M3.2,-6.6 H5.6 a1,1 0 0 1 1,1 V-3.4 M6.6,3.4 V5.6 a1,1 0 0 1 -1,1 H3.2 M-3.2,6.6 H-5.6 a1,1 0 0 1 -1,-1 V3.4"/><path d="M-2.4,-3.2 L-1.6,-4.1 H1.6 L2.4,-3.2 H3 a1.3,1.3 0 0 1 1.3,1.3 V2.4 a1.3,1.3 0 0 1 -1.3,1.3 H-3 a1.3,1.3 0 0 1 -1.3,-1.3 V-1.9 a1.3,1.3 0 0 1 1.3,-1.3 Z"/><ellipse cx="0" cy="0.2" rx="1.3" ry="1.5" stroke-width="1.1"/></svg>
<span class="t" style="left:37.00px;top:324.55px;font-size:12.7px;line-height:12.7px;letter-spacing:-0.818px;word-spacing:1.27px;color:#404040;-webkit-text-stroke:0.15px #fff;">IVC Long Axis</span>
<span class="t" style="left:39.70px;top:348.50px;font-size:12.7px;line-height:12.7px;letter-spacing:-0.889px;word-spacing:1.27px;color:#404040;-webkit-text-stroke:0.15px #fff;">IVC Long</span>
<span class="t" style="left:15.70px;top:372.80px;font-size:13px;line-height:13px;letter-spacing:0.000px;word-spacing:0.00px;color:#6a6a6a;-webkit-text-stroke:0.2px #fff;">Saved</span>
</div>
<div class="card" style="left:1117.1px;top:698px;width:372px;height:397px;">
<svg class="us" viewBox="0 0 372 284" width="372" height="284"><rect width="372" height="284" fill="#000"/><g clip-path="url(#sec10)"><g filter="url(#sp)"><rect width="372" height="283" fill="#505050"/><g transform="translate(-7.3,-8) scale(0.29542)"><polygon points="370,60 1240,60 1240,480 370,480" fill="#707070" filter="url(#b10)"/><path d="M620,95 A296,296 0 0 0 1000,95" fill="none" stroke="#909090" stroke-width="6" filter="url(#b3)"/><path d="M608,109 A314,314 0 0 0 1012,109" fill="none" stroke="#b8b8b8" stroke-width="5" filter="url(#b3)"/><path d="M753,193 A330,330 0 0 0 1022,121" fill="none" stroke="#ececec" stroke-width="7" filter="url(#b3)"/><path d="M585,136 A350,350 0 0 0 1035,136" fill="none" stroke="#8c8c8c" stroke-width="5" filter="url(#b3)"/><ellipse cx="720" cy="262" rx="14" ry="6" fill="#222" filter="url(#b3)"/><ellipse cx="1020" cy="355" rx="40" ry="8" fill="#2a2a2a" transform="rotate(-10 1020 355)" filter="url(#b4)"/><ellipse cx="565" cy="368" rx="100" ry="34" fill="#1c1c1c" transform="rotate(14 565 368)" filter="url(#b5)"/><polyline points="470,310 520,316 570,332 600,346 590,326" fill="none" stroke="#ececec" stroke-width="7" stroke-linecap="round" stroke-linejoin="round" filter="url(#b3)"/><polyline points="460,380 520,405 560,410" fill="none" stroke="#bbb" stroke-width="5" stroke-linecap="round" stroke-linejoin="round" filter="url(#b3)"/><polyline points="600,405 680,392 760,376 860,402 1010,390 1150,340" fill="none" stroke="#e0e0e0" stroke-width="10" stroke-linecap="round" stroke-linejoin="round" filter="url(#b4)"/><polygon points="365,492 520,442 640,412 760,388 860,412 1010,402 1150,352 1240,318 1240,445 1100,470 960,492 830,512 730,532 660,572 560,602 365,628" fill="#1d1d1d" filter="url(#b5)"/><polygon points="1100,478 1240,450 1240,570 1080,540" fill="#585858" filter="url(#b10)"/><polygon points="720,548 830,516 960,496 1100,476 1010,560 900,592 800,565 765,625 700,600" fill="#c8c8c8" filter="url(#b10)"/><ellipse cx="770" cy="525" rx="14" ry="18" fill="#555" filter="url(#b4)"/><polygon points="365,640 560,612 700,602 710,680 500,745 365,750" fill="#6a6a6a" filter="url(#b12)"/><ellipse cx="420" cy="720" rx="50" ry="44" fill="#7a7a7a" filter="url(#b12)"/><polygon points="540,730 720,660 800,620 1000,580 1240,520 1240,950 365,950 365,820" fill="#242424" filter="url(#b16)"/><ellipse cx="1040" cy="620" rx="30" ry="16" fill="#484848" filter="url(#b6)"/><ellipse cx="1115" cy="865" rx="34" ry="10" fill="#666" transform="rotate(-12 1115 865)" filter="url(#b5)"/><ellipse cx="780" cy="800" rx="16" ry="14" fill="#3a3a3a" filter="url(#b5)"/></g></g></g><circle cx="157" cy="3.3" r="3.3" fill="#fff"/><rect x="356" y="33.6" width="11.2" height="2" fill="#fff"/><rect x="365.7" y="56.2" width="1.4" height="2.2" fill="#ddd"/><rect x="365.7" y="79.1" width="1.4" height="2.2" fill="#ddd"/><rect x="365.7" y="102.0" width="1.4" height="2.2" fill="#ddd"/><rect x="365.7" y="124.8" width="1.4" height="2.2" fill="#ddd"/><rect x="365.1" y="146.7" width="2.6" height="4.2" fill="#fff"/><rect x="365.7" y="170.6" width="1.4" height="2.2" fill="#ddd"/><rect x="365.7" y="193.5" width="1.4" height="2.2" fill="#ddd"/><rect x="365.7" y="216.4" width="1.4" height="2.2" fill="#ddd"/><rect x="365.7" y="239.2" width="1.4" height="2.2" fill="#ddd"/><rect x="365.7" y="262.1" width="1.4" height="2.2" fill="#ddd"/><text x="368.5" y="274.3" text-anchor="end" font-family="Liberation Sans,sans-serif" font-weight="700" font-size="12.6" fill="#fff">10.0</text></svg>
<div class="badge"></div>
<span class="t" style="left:13.40px;top:11.28px;font-size:11.6px;line-height:11.6px;letter-spacing:-0.459px;word-spacing:1.16px;color:#3a2c00;">Test Mode</span>
<h4 class="t" style="left:16.60px;top:293.66px;font-size:16px;line-height:16px;letter-spacing:-1.336px;word-spacing:1.60px;color:#1068a8;-webkit-text-stroke:0.22px #fff;">Case 1 | Point A</h4>
<svg class="abs" style="left:16.3px;top:322.0px" width="18" height="16" viewBox="-9 -8 18 16" fill="none" stroke="#3c3f44" stroke-width="1.2" stroke-linejoin="round" stroke-linecap="round"><path d="M-4.6,4.2 C-6,3.2 -6.7,1.7 -6.7,0 C-6.7,-2.9 -3.7,-5.3 0,-5.3 C3.7,-5.3 6.7,-2.9 6.7,0 C6.7,2.9 3.7,5.3 0,5.3 C-1.2,5.3 -2.4,5.1 -3.4,4.7 C-4.4,5.6 -5.5,6.2 -6.6,6.3 C-5.8,5.6 -5.0,4.9 -4.6,4.2 Z"/></svg>
<svg class="abs" style="left:16.2px;top:345.2px" width="18" height="18" viewBox="-9 -9 18 18" fill="none" stroke="#3c3f44" stroke-width="1.2" stroke-linejoin="round" stroke-linecap="round"><path d="M-6.6,-3.4 V-5.6 a1,1 0 0 1 1,-1 H-3.2 M3.2,-6.6 H5.6 a1,1 0 0 1 1,1 V-3.4 M6.6,3.4 V5.6 a1,1 0 0 1 -1,1 H3.2 M-3.2,6.6 H-5.6 a1,1 0 0 1 -1,-1 V3.4"/><path d="M-2.4,-3.2 L-1.6,-4.1 H1.6 L2.4,-3.2 H3 a1.3,1.3 0 0 1 1.3,1.3 V2.4 a1.3,1.3 0 0 1 -1.3,1.3 H-3 a1.3,1.3 0 0 1 -1.3,-1.3 V-1.9 a1.3,1.3 0 0 1 1.3,-1.3 Z"/><ellipse cx="0" cy="0.2" rx="1.3" ry="1.5" stroke-width="1.1"/></svg>
<span class="t" style="left:37.00px;top:324.55px;font-size:12.7px;line-height:12.7px;letter-spacing:-0.818px;word-spacing:1.27px;color:#404040;-webkit-text-stroke:0.15px #fff;">IVC Long Axis</span>
<span class="t" style="left:39.70px;top:348.50px;font-size:12.7px;line-height:12.7px;letter-spacing:-0.889px;word-spacing:1.27px;color:#404040;-webkit-text-stroke:0.15px #fff;">IVC Long</span>
<span class="t" style="left:15.70px;top:372.80px;font-size:13px;line-height:13px;letter-spacing:0.000px;word-spacing:0.00px;color:#6a6a6a;-webkit-text-stroke:0.2px #fff;">Saved</span>
</div>
<div class="card" style="left:1507px;top:698px;width:371.4px;height:397px;">
<svg class="us" viewBox="0 0 372 284" width="372" height="284"><rect width="372" height="284" fill="#000"/><g clip-path="url(#sec10)"><g filter="url(#sp)"><rect width="372" height="283" fill="#484848"/><g transform="translate(-6.8,-8) scale(0.29542)"><polygon points="370,60 1240,60 1240,450 370,450" fill="#666" filter="url(#b10)"/><path d="M622,92 A292,292 0 0 0 886,150" fill="none" stroke="#9a9a9a" stroke-width="5" filter="url(#b3)"/><polyline points="620,120 720,175 830,205 950,215" fill="none" stroke="#e0e0e0" stroke-width="7" stroke-linecap="round" stroke-linejoin="round" filter="url(#b3)"/><polyline points="640,170 760,215 880,235 1000,240" fill="none" stroke="#bcbcbc" stroke-width="6" stroke-linecap="round" stroke-linejoin="round" filter="url(#b3)"/><polyline points="880,255 960,270 1040,285" fill="none" stroke="#9a9a9a" stroke-width="5" stroke-linecap="round" stroke-linejoin="round" filter="url(#b3)"/><ellipse cx="1010" cy="330" rx="120" ry="60" fill="#505050" filter="url(#b16)"/><ellipse cx="1085" cy="260" rx="30" ry="30" fill="#888" filter="url(#b10)"/><ellipse cx="667" cy="262" rx="13" ry="7" fill="#1c1c1c" filter="url(#b3)"/><ellipse cx="800" cy="322" rx="10" ry="5" fill="#333" filter="url(#b3)"/><ellipse cx="688" cy="392" rx="92" ry="46" fill="#080808" filter="url(#b6)"/><ellipse cx="480" cy="345" rx="42" ry="36" fill="#c0c0c0" filter="url(#b6)"/><ellipse cx="478" cy="350" rx="24" ry="20" fill="#4a4a4a" filter="url(#b5)"/><ellipse cx="432" cy="398" rx="34" ry="24" fill="#d0d0d0" filter="url(#b6)"/><ellipse cx="580" cy="335" rx="12" ry="10" fill="#222" filter="url(#b3)"/><ellipse cx="560" cy="505" rx="55" ry="65" fill="#303030" filter="url(#b10)"/><ellipse cx="795" cy="470" rx="48" ry="24" fill="#383838" filter="url(#b6)"/><ellipse cx="690" cy="470" rx="40" ry="18" fill="#4a4a4a" filter="url(#b6)"/><polyline points="630,525 740,535 900,470 1060,425 1100,410" fill="none" stroke="#acacac" stroke-width="24" stroke-linecap="round" stroke-linejoin="round" filter="url(#b8)"/><polyline points="650,520 740,528 820,500 900,462 1040,430" fill="none" stroke="#d8d8d8" stroke-width="8" stroke-linecap="round" stroke-linejoin="round" filter="url(#b4)"/><polyline points="880,440 1000,420 1080,400" fill="none" stroke="#b0b0b0" stroke-width="10" stroke-linecap="round" stroke-linejoin="round" filter="url(#b5)"/><polygon points="365,470 520,440 600,560 620,860 365,860" fill="#2c2c2c" filter="url(#b18)"/><polyline points="640,620 780,585 1000,508 1240,448" fill="none" stroke="#222" stroke-width="58" stroke-linecap="round" stroke-linejoin="round" filter="url(#b10)"/><polyline points="860,622 1000,585 1240,520" fill="none" stroke="#7c7c7c" stroke-width="12" stroke-linecap="round" stroke-linejoin="round" filter="url(#b6)"/><polygon points="600,700 860,640 1240,540 1240,950 600,950" fill="#4c4c4c" filter="url(#b14)"/><ellipse cx="1020" cy="690" rx="150" ry="70" fill="#6c6c6c" filter="url(#b16)"/><ellipse cx="880" cy="800" rx="30" ry="60" fill="#707070" filter="url(#b10)"/><ellipse cx="955" cy="878" rx="34" ry="16" fill="#8a8a8a" filter="url(#b6)"/><ellipse cx="1100" cy="780" rx="80" ry="80" fill="#383838" filter="url(#b16)"/><ellipse cx="600" cy="850" rx="200" ry="50" fill="#262626" filter="url(#b16)"/></g></g></g><circle cx="157" cy="3.3" r="3.3" fill="#fff"/><rect x="356" y="33.6" width="11.2" height="2" fill="#fff"/><rect x="365.7" y="56.2" width="1.4" height="2.2" fill="#ddd"/><rect x="365.7" y="79.1" width="1.4" height="2.2" fill="#ddd"/><rect x="365.7" y="102.0" width="1.4" height="2.2" fill="#ddd"/><rect x="365.7" y="124.8" width="1.4" height="2.2" fill="#ddd"/><rect x="365.1" y="146.7" width="2.6" height="4.2" fill="#fff"/><rect x="365.7" y="170.6" width="1.4" height="2.2" fill="#ddd"/><rect x="365.7" y="193.5" width="1.4" height="2.2" fill="#ddd"/><rect x="365.7" y="216.4" width="1.4" height="2.2" fill="#ddd"/><rect x="365.7" y="239.2" width="1.4" height="2.2" fill="#ddd"/><rect x="365.7" y="262.1" width="1.4" height="2.2" fill="#ddd"/><text x="368.5" y="274.3" text-anchor="end" font-family="Liberation Sans,sans-serif" font-weight="700" font-size="12.6" fill="#fff">10.0</text></svg>
<div class="badge"></div>
<span class="t" style="left:13.40px;top:11.28px;font-size:11.6px;line-height:11.6px;letter-spacing:-0.459px;word-spacing:1.16px;color:#3a2c00;">Test Mode</span>
<h4 class="t" style="left:16.60px;top:293.66px;font-size:16px;line-height:16px;letter-spacing:-1.336px;word-spacing:1.60px;color:#1068a8;-webkit-text-stroke:0.22px #fff;">Case 1 | Point A</h4>
<svg class="abs" style="left:16.3px;top:322.0px" width="18" height="16" viewBox="-9 -8 18 16" fill="none" stroke="#3c3f44" stroke-width="1.2" stroke-linejoin="round" stroke-linecap="round"><path d="M-4.6,4.2 C-6,3.2 -6.7,1.7 -6.7,0 C-6.7,-2.9 -3.7,-5.3 0,-5.3 C3.7,-5.3 6.7,-2.9 6.7,0 C6.7,2.9 3.7,5.3 0,5.3 C-1.2,5.3 -2.4,5.1 -3.4,4.7 C-4.4,5.6 -5.5,6.2 -6.6,6.3 C-5.8,5.6 -5.0,4.9 -4.6,4.2 Z"/></svg>
<svg class="abs" style="left:16.2px;top:345.2px" width="18" height="18" viewBox="-9 -9 18 18" fill="none" stroke="#3c3f44" stroke-width="1.2" stroke-linejoin="round" stroke-linecap="round"><path d="M-6.6,-3.4 V-5.6 a1,1 0 0 1 1,-1 H-3.2 M3.2,-6.6 H5.6 a1,1 0 0 1 1,1 V-3.4 M6.6,3.4 V5.6 a1,1 0 0 1 -1,1 H3.2 M-3.2,6.6 H-5.6 a1,1 0 0 1 -1,-1 V3.4"/><path d="M-2.4,-3.2 L-1.6,-4.1 H1.6 L2.4,-3.2 H3 a1.3,1.3 0 0 1 1.3,1.3 V2.4 a1.3,1.3 0 0 1 -1.3,1.3 H-3 a1.3,1.3 0 0 1 -1.3,-1.3 V-1.9 a1.3,1.3 0 0 1 1.3,-1.3 Z"/><ellipse cx="0" cy="0.2" rx="1.3" ry="1.5" stroke-width="1.1"/></svg>
<span class="t" style="left:37.00px;top:324.55px;font-size:12.7px;line-height:12.7px;letter-spacing:-0.818px;word-spacing:1.27px;color:#404040;-webkit-text-stroke:0.15px #fff;">IVC Long Axis</span>
<span class="t" style="left:39.70px;top:348.50px;font-size:12.7px;line-height:12.7px;letter-spacing:-0.889px;word-spacing:1.27px;color:#404040;-webkit-text-stroke:0.15px #fff;">IVC Long</span>
<span class="t" style="left:15.70px;top:372.80px;font-size:13px;line-height:13px;letter-spacing:0.000px;word-spacing:0.00px;color:#6a6a6a;-webkit-text-stroke:0.2px #fff;">Saved</span>
</div>
</main>
</body></html>
